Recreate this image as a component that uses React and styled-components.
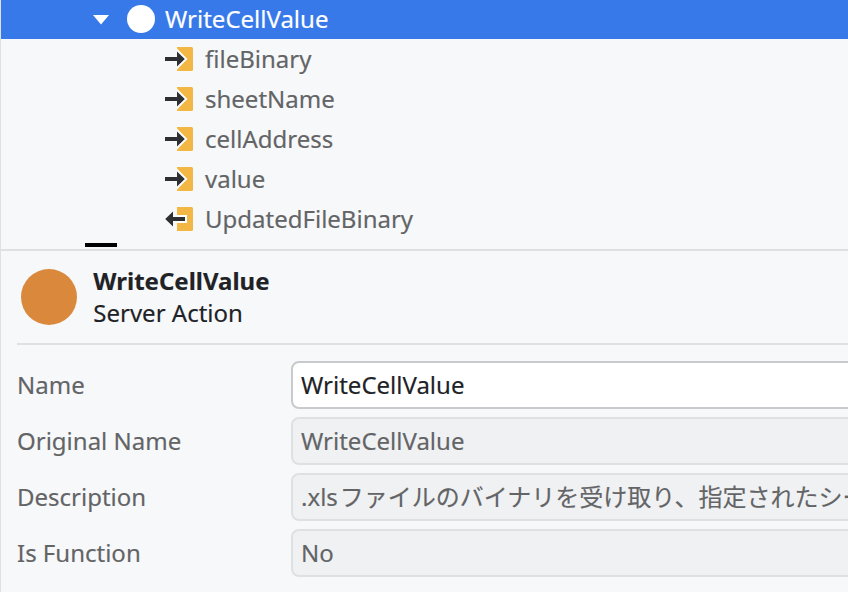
import React from 'react';
import styled, { createGlobalStyle } from "styled-components";

const inputs = ["fileBinary", "sheetName", "cellAddress", "value"];

const fields = [
    { label: "Name", value: "WriteCellValue", editable: true },
    { label: "Original Name", value: "WriteCellValue" },
    { label: "Description", value: <>.xls<Japanese>ファイルのバイナリを受け取り、指定されたシー</Japanese></> },
    { label: "Is Function", value: "No" },
];

function Japanese({ children }) {
    return <JapaneseText lang="ja">{children}</JapaneseText>;
}

const InputIcon = () => (
    <svg width="28" height="24" viewBox="0 0 28 24">
        <path d="M12 0H26.5Q28 0 28 1.5V22.5Q28 24 26.5 24H12Z" fill="#f2b744"/>
        <path d="M12 1.5L22.5 12L12 22.5Z" fill="#fff"/>
        <path d="M0 10H12V4.4L19.8 12L12 19.6V14H0Z" fill="#2d2f33"/>
    </svg>
);

const OutputIcon = () => (
    <svg width="28" height="24" viewBox="0 0 28 24">
        <path d="M12 0H26.5Q28 0 28 1.5V22.5Q28 24 26.5 24H12Z" fill="#f2b744"/>
        <path d="M12 8H22V16H12Z" fill="#fff"/>
        <path d="M20 10H8V4.4L0.2 12L8 19.6V14H20Z" fill="#2d2f33"/>
    </svg>
);

const App = () => {
    return (
        <Page>
            <Global/>
            <Tree>
                <Selected>
                    <Arrow width="16" height="10" viewBox="0 0 16 10">
                        <path d="M0 0H16L8 9.5Z" fill="#fff"/>
                    </Arrow>
                    <Dot/>
                    <span>WriteCellValue</span>
                </Selected>
                {inputs.map((name) => (
                    <Row key={name}>
                        <InputIcon/>
                        <span>{name}</span>
                    </Row>
                ))}
                <Row>
                    <OutputIcon/>
                    <span>UpdatedFileBinary</span>
                </Row>
                <Mark/>
            </Tree>
            <Properties>
                <Header>
                    <Circle/>
                    <div>
                        <Title>WriteCellValue</Title>
                        <Kind>Server Action</Kind>
                    </div>
                </Header>
                <Form>
                    {fields.map((field) => (
                        <Field key={field.label}>
                            <Label>{field.label}</Label>
                            <Value $editable={field.editable}>{field.value}</Value>
                        </Field>
                    ))}
                </Form>
            </Properties>
        </Page>
    );
};

const Global = createGlobalStyle`
  body {
    margin: 0;
    background: #f7f8fa;
  }

  * {
    box-sizing: border-box;
  }
`

const Page = styled.div`
  height: 592px;
  overflow: hidden;
  border-left: 1px solid #dee0e2;
  background: #f7f8fa;
  color: #636466;
  font-family: "Noto Sans", "Noto Sans CJK JP", sans-serif;
  font-size: 24px;
  line-height: 32px;
  white-space: nowrap;
  -webkit-text-stroke: 0.15px currentColor;
`

const Tree = styled.div`
  height: 251px;
  border-bottom: 2px solid #dee0e2;
`

const Selected = styled.div`
  display: flex;
  align-items: center;
  height: 39px;
  padding: 0 0 1px 92px;
  background: #3879ea;
  color: #fff;
`

const Arrow = styled.svg`
  margin: 2px 18px 0 0;
`

const Dot = styled.div`
  width: 28px;
  height: 28px;
  margin-right: 10px;
  border-radius: 50%;
  background: #fff;
`

const Row = styled.div`
  display: flex;
  align-items: center;
  gap: 12px;
  height: 40px;
  padding-left: 164px;
`

const Mark = styled.div`
  width: 32px;
  height: 4px;
  margin: 4px 0 0 84px;
  background: #000;
`

const Properties = styled.div`
  padding-left: 16px;
`

const Header = styled.div`
  display: flex;
  align-items: center;
  gap: 16.3px;
  height: 94px;
  padding-left: 4px;
  border-bottom: 2px solid #dee0e2;
  color: #202226;
`

const Circle = styled.div`
  width: 56px;
  height: 56px;
  border-radius: 50%;
  background: #da883c;
`

const Title = styled.div`
  font-weight: 700;
`

const Kind = styled.div`
  font-weight: 400;
`

const Form = styled.div`
  display: grid;
  gap: 8px;
  padding-top: 16px;
`

const Field = styled.div`
  display: grid;
  grid-template-columns: 274px 1fr;
  align-items: center;
  height: 48px;
`

const Label = styled.div`
  color: #636466;
`

const Value = styled.div`
  height: 48px;
  width: 580px;
  padding: 6px 8px;
  overflow: hidden;
  border: 2px solid ${(props) => (props.$editable ? "#c9cace" : "#dee0e2")};
  border-radius: 8px;
  background: ${(props) => (props.$editable ? "#fff" : "#f0f1f3")};
  color: ${(props) => (props.$editable ? "#202226" : "#636466")};
`

const JapaneseText = styled.span`
  margin-left: 2px;
`

export default App;
